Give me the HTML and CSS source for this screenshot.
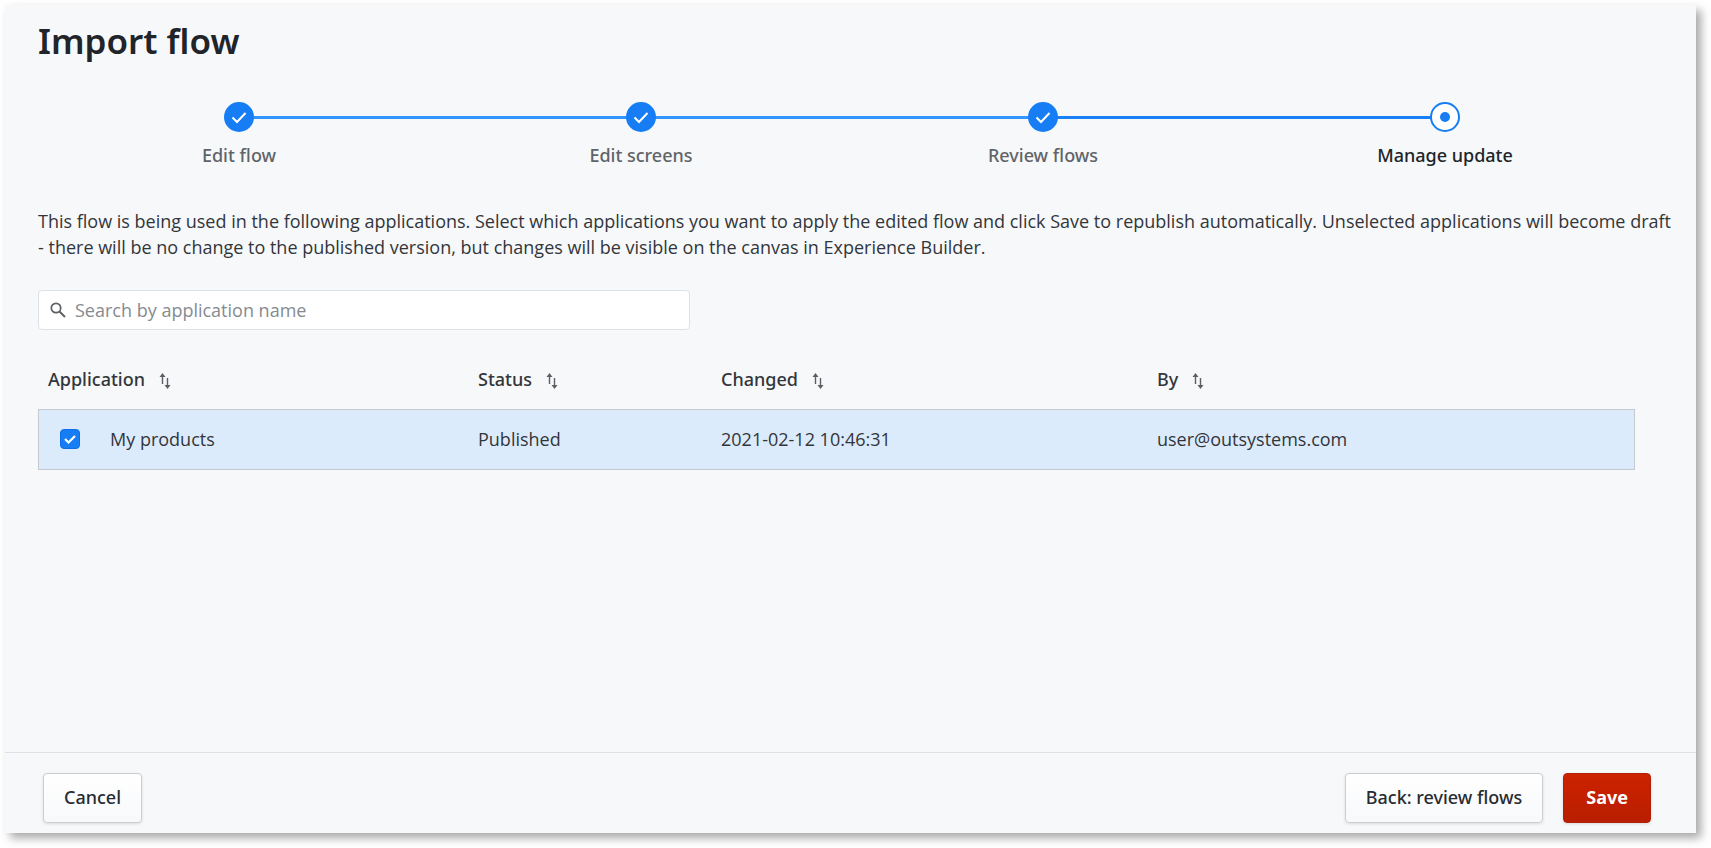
FILE: index.html
```html
<!DOCTYPE html>
<html lang="en">
<head>
<meta charset="utf-8">
<meta name="viewport" content="width=device-width, initial-scale=1">
<title>Import flow</title>
<link rel="stylesheet" href="styles.css">
</head>
<body>
<svg class="sprite" aria-hidden="true">
  <symbol id="check" viewBox="0 0 16 16"><path d="M1.5 8.5 6 13 14.5 4" fill="none" stroke="currentColor" stroke-width="2"/></symbol>
  <symbol id="sort" viewBox="0 0 12 16"><path d="M3.5 11V2M8.500 5v9" fill="none" stroke="currentColor" stroke-width="1.400"/><path d="M3.500 0 6.500 4h-6zM8.500 16 5.500 12h6z" fill="currentColor"/></symbol>
</svg>
<main class="panel">
  <div class="content">
    <h1 class="title">Import flow</h1>
    <ol class="steps">
      <li class="step"><span class="dot"><svg class="dot-icon"><use href="#check"/></svg></span><span>Edit flow</span></li>
      <li class="step"><span class="dot"><svg class="dot-icon"><use href="#check"/></svg></span><span>Edit screens</span></li>
      <li class="step step-last-done"><span class="dot"><svg class="dot-icon"><use href="#check"/></svg></span><span>Review flows</span></li>
      <li class="step step-current" aria-current="step"><span class="dot"></span><span>Manage update</span></li>
    </ol>
    <p class="intro">This flow is being used in the following applications. Select which applications you want to apply the edited flow and click Save to republish automatically. Unselected applications will become draft<br>- there will be no change to the published version, but changes will be visible on the canvas in Experience Builder.</p>
    <label class="search">
      <svg class="search-icon" viewBox="0 0 16 16" aria-hidden="true"><circle cx="6" cy="6" r="4.700" fill="none" stroke="currentColor" stroke-width="1.700"/><path d="m9.500 9.500 5.500 5.500" stroke="currentColor" stroke-width="2"/></svg>
      <input class="search-input" type="text" placeholder="Search by application name" aria-label="Search by application name">
    </label>
    <table class="apps">
      <colgroup><col class="col-app"><col class="col-status"><col class="col-changed"><col></colgroup>
      <thead>
        <tr>
          <th scope="col">Application<svg class="sort"><use href="#sort"/></svg></th>
          <th scope="col">Status<svg class="sort"><use href="#sort"/></svg></th>
          <th scope="col">Changed<svg class="sort"><use href="#sort"/></svg></th>
          <th scope="col">By<svg class="sort"><use href="#sort"/></svg></th>
        </tr>
      </thead>
      <tbody>
        <tr>
          <td><label class="pick"><span class="box"><input class="tick" type="checkbox" checked><svg class="tick-icon" viewBox="0 0 12 12" aria-hidden="true"><path d="M1 6 4.500 9.500 11 3" fill="none" stroke="currentColor" stroke-width="2.200"/></svg></span>My products</label></td>
          <td>Published</td>
          <td>2021-02-12 10:46:31</td>
          <td>user@outsystems.com</td>
        </tr>
      </tbody>
    </table>
  </div>
  <footer class="footer">
    <button class="btn" type="button">Cancel</button>
    <div class="actions">
      <button class="btn" type="button">Back: review flows</button>
      <button class="btn btn-save" type="button">Save</button>
    </div>
  </footer>
</main>
</body>
</html>
```
FILE: styles.css
```css
* { box-sizing: border-box; }
body {
  margin: 0;
  padding: 5px 15px 15px 5px;
  min-height: 100vh;
  display: flex;
  background: #fff;
  color: #32363a;
  font: 18px/26px "Open Sans", "Noto Sans", sans-serif;
}
.title, .step, .apps th, .btn { font-family: "Noto Sans", sans-serif; }
.sprite { position: absolute; width: 0; height: 0; }
.panel {
  flex: 1;
  min-width: 0;
  display: flex;
  flex-direction: column;
  background: #f7f8fa;
  box-shadow: 5px 5px 9px rgba(0, 0, 0, 0.35);
}
.content { flex: 1; padding: 11px 50px 20px 33px; }
.title {
  margin: 0;
  color: #212529;
  font-size: 35px;
  line-height: 50px;
  font-weight: 600;
}
.steps {
  display: grid;
  grid-template-columns: repeat(4, 1fr);
  margin: 36px 0 0;
  padding: 0;
  list-style: none;
}
.step {
  position: relative;
  display: flex;
  flex-direction: column;
  align-items: center;
  gap: 10px;
  color: #606468;
  font-weight: 500;
}
.step:not(:last-child)::after {
  content: "";
  position: absolute;
  top: 14px;
  left: 50%;
  width: 100%;
  height: 3px;
  background: #3396ff;
}
.step-last-done:not(:last-child)::after { background: #1a80f5; }
.dot {
  position: relative;
  z-index: 1;
  display: grid;
  place-items: center;
  width: 30px;
  height: 30px;
  border-radius: 50%;
  background: #167df5;
  color: #fff;
}
.dot-icon { width: 16px; height: 16px; }
.step-current { color: #212529; }
.step-current .dot { background: #fff; border: 2px solid #167df5; }
.step-current .dot::before {
  content: "";
  width: 10px;
  height: 10px;
  border-radius: 50%;
  background: #167df5;
}
.intro { margin: 40px -40px 30px 0; }
.search {
  display: flex;
  align-items: center;
  gap: 9px;
  width: 652px;
  max-width: 100%;
  height: 40px;
  padding: 0 11px;
  border: 1px solid #dee2e6;
  border-radius: 4px;
  background: #fff;
}
.search-icon { width: 16px; height: 16px; color: #5c6064; }
.search-input {
  flex: 1;
  min-width: 0;
  padding: 0;
  border: 0;
  outline: 0;
  background: none;
  color: inherit;
  font: inherit;
}
.search-input::placeholder { color: #868b90; opacity: 1; }
.apps {
  width: calc(100% - 11px);
  margin-top: 20px;
  table-layout: fixed;
  border-collapse: separate;
  border-spacing: 0;
  text-align: left;
}
.col-app { width: 430px; }
.col-status { width: 243px; }
.col-changed { width: 436px; }
.apps th {
  height: 59px;
  padding: 0 10px 2px;
  font-weight: 500;
}
.apps td {
  height: 61px;
  padding: 0 10px 2px;
  border: solid #c5cad2;
  border-width: 1px 0;
  background: #dcebfc;
}
.apps td:first-child { border-left-width: 1px; }
.apps td:last-child { border-right-width: 1px; }
.sort {
  width: 12px;
  height: 16px;
  margin-left: 14px;
  vertical-align: -3px;
  color: #5c6064;
}
.pick { display: flex; align-items: center; gap: 30px; padding-left: 11px; }
.box { display: grid; place-items: center; }
.tick, .tick-icon { grid-area: 1 / 1; }
.tick {
  appearance: none;
  width: 20px;
  height: 20px;
  margin: 0;
  border: 1px solid #0d6fe8;
  border-radius: 4px;
  background: #fff;
}
.tick:checked { background: #167df5; }
.tick-icon { width: 12px; height: 12px; color: #fff; pointer-events: none; }
.footer {
  display: flex;
  justify-content: space-between;
  padding: 20px 45px 10px 38px;
  border-top: 1px solid #dee2e6;
}
.actions { display: flex; gap: 20px; }
.btn {
  height: 50px;
  padding: 0 20px 2px;
  border: 1px solid #cbced2;
  border-radius: 4px;
  background: linear-gradient(#fff, #f8f9fb);
  box-shadow: 0 1px 3px rgba(0, 0, 0, 0.12);
  color: #272b30;
  font-size: 18px;
  font-weight: 500;
}
.btn-save {
  padding: 0 22px 2px;
  border-color: #b31f08;
  background: linear-gradient(#cc2200, #b81e00);
  color: #fff;
  font-weight: 700;
}
```
